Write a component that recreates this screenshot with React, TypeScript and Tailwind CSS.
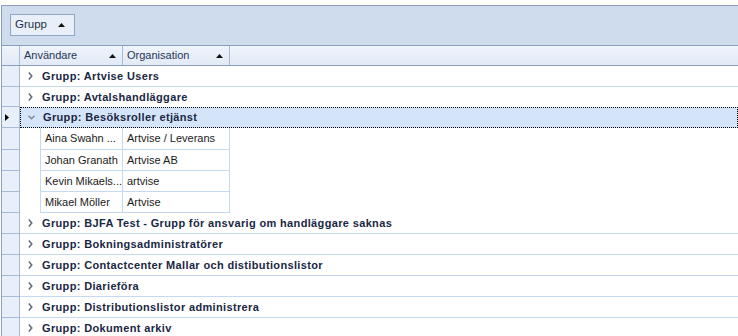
import React from 'react';

const font = { fontFamily: '"Liberation Sans", Arial, sans-serif' };

const topGroups = ['Artvise Users', 'Avtalshandläggare'];
const members = [
  ['Aina Swahn ...', 'Artvise / Leverans'],
  ['Johan Granath', 'Artvise AB'],
  ['Kevin Mikaels...', 'artvise'],
  ['Mikael Möller', 'Artvise'],
];
const bottomGroups = [
  'BJFA Test - Grupp för ansvarig om handläggare saknas',
  'Bokningsadministratörer',
  'Contactcenter Mallar och distibutionslistor',
  'Diarieföra',
  'Distributionslistor administrera',
  'Dokument arkiv',
];

function SortUp() {
  return (
    <svg width="7" height="4" viewBox="0 0 7 4" className="shrink-0">
      <path d="M0 4 L3.5 0 L7 4 Z" fill="#111" />
    </svg>
  );
}

function Chevron({ open }: { open?: boolean }) {
  return open ? (
    <svg width="7" height="5" viewBox="0 0 7 5" className="shrink-0">
      <path d="M0.5 0.8 L3.5 3.8 L6.5 0.8" fill="none" stroke="#7c8796" strokeWidth="1.4" />
    </svg>
  ) : (
    <svg width="5" height="8" viewBox="0 0 5 8" className="shrink-0">
      <path d="M0.8 0.5 L3.8 4 L0.8 7.5" fill="none" stroke="#5f6b7b" strokeWidth="1.5" />
    </svg>
  );
}

function Indicator({ h, current }: { h: string; current?: boolean }) {
  return (
    <div className={`${h} w-[18px] shrink-0 bg-[#e8eff9] border-r border-b border-[#a7bad6] flex items-center pl-[3px]`}>
      {current && (
        <svg width="4" height="7" viewBox="0 0 4 7">
          <path d="M0 0 L4 3.5 L0 7 Z" fill="#000" />
        </svg>
      )}
    </div>
  );
}

function GroupRow({ name, h = 'h-[21px]', line = true }: { name: string; h?: string; line?: boolean }) {
  return (
    <div className="flex">
      <Indicator h={h} />
      <div className={`${h} flex-1 flex items-center gap-[9px] pl-[8px] ${line ? 'border-b border-[#c6d9f2]' : ''}`}>
        <Chevron />
        <span className="text-[11px] font-bold tracking-[0.35px] whitespace-nowrap text-[#1a2744]">Grupp: {name}</span>
      </div>
    </div>
  );
}

export default function App() {
  return (
    <div className="w-[738px] h-[336px] overflow-hidden bg-white pt-[5px] pl-[1px]" style={font}>
      <div className="border-l border-t border-[#8a9fbc] h-full">
        {/* group-by panel */}
        <div className="h-[40px] bg-[#cfdcee] border-b border-[#8a9fbc] pt-[8px] pl-[8px]">
          <div className="w-[65px] h-[22px] border border-[#8fa6c4] bg-[#e9eff8] flex items-center justify-between pl-[4px] pr-[9px]">
            <span className="text-[11.5px] text-[#1e2f4d]">Grupp</span>
            <SortUp />
          </div>
        </div>

        {/* column header */}
        <div className="flex h-[20px] border-b border-[#8a9fbc] bg-gradient-to-b from-[#f0f4fb] to-[#e2eaf6]">
          <div className="w-[18px] border-r border-[#a7bad6]" />
          <div className="w-[103px] border-r border-[#a7bad6] flex items-center justify-between pl-[4px] pr-[6px]">
            <span className="text-[11px] text-[#1e3557]">Användare</span>
            <SortUp />
          </div>
          <div className="w-[107px] border-r border-[#a7bad6] flex items-center justify-between pl-[4px] pr-[6px]">
            <span className="text-[11px] text-[#1e3557]">Organisation</span>
            <SortUp />
          </div>
        </div>

        <GroupRow name={topGroups[0]} />
        <GroupRow name={topGroups[1]} h="h-[20px]" line={false} />

        {/* focused group */}
        <div className="flex">
          <Indicator h="h-[21px]" current />
          <div className="h-[21px] flex-1 flex items-center gap-[8px] pl-[7px] bg-[#d5e5f9] border border-dotted border-black">
            <Chevron open />
            <span className="text-[11px] font-bold tracking-[0.35px] whitespace-nowrap text-[#1a2744]">Grupp: Besöksroller etjänst</span>
          </div>
        </div>

        {members.map(([user, org], i) => (
          <div key={user} className="flex">
            <Indicator h={i === 0 ? 'h-[22px]' : 'h-[21px]'} />
            <div className="w-[20px] shrink-0" />
            <div className={`${i === 0 ? 'h-[22px]' : 'h-[21px]'} flex border-l border-b border-[#c6d9f2] text-[11px] text-[#1a1a1a] whitespace-nowrap`}>
              <div className="w-[82px] border-r border-[#c6d9f2] flex items-center pl-[4px] overflow-hidden">{user}</div>
              <div className="w-[107px] border-r border-[#c6d9f2] flex items-center pl-[4px]">{org}</div>
            </div>
          </div>
        ))}

        {bottomGroups.map((g) => (
          <GroupRow key={g} name={g} />
        ))}
      </div>
    </div>
  );
}
